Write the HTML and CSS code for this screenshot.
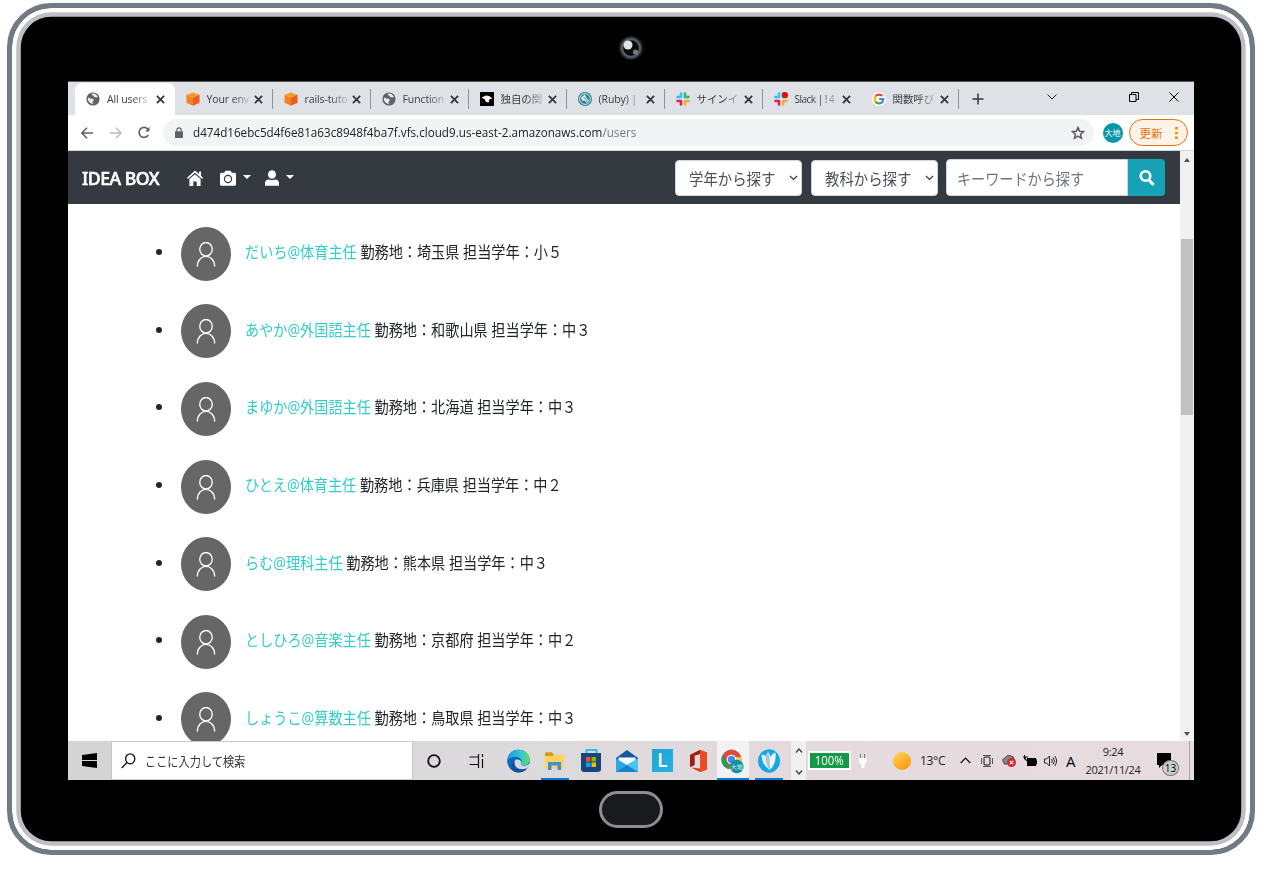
FILE: index.html
```
<!DOCTYPE html>
<html lang="ja">
<head>
<meta charset="utf-8">
<title>All users</title>
<link rel="stylesheet" href="styles.css">
</head>
<body>
<svg class="defs" aria-hidden="true">
  <defs>
    <symbol id="globe" viewBox="0 0 14 14"><circle cx="7" cy="7" r="6.600" fill="#5f6368"/><path d="M2.200 5.600Q4 7 6.500 6.600L8 8.200 6.600 9.200 7 12Q3 11.600 1.800 7.500ZM6.300 1.500 9 1.700 12 4.500 10.500 5.500 8.200 5 7.500 3.700 5.700 3Z" fill="#e8eaed"/></symbol>
    <symbol id="cube" viewBox="0 0 15 15"><path d="M7.500 .5 14.500 3 7.500 6 .5 3Z" fill="#fa9a28"/><path d="M.5 3 7.500 6V14.700L.5 11.500Z" fill="#f58220"/><path d="M14.500 3 7.500 6V14.700L14.500 11.500Z" fill="#e8601c"/></symbol>
    <symbol id="slack" viewBox="0 0 14 14"><g stroke-width="2.600" stroke-linecap="round"><path d="M5 1.500V5M1.500 5H5" stroke="#36c5f0"/><path d="M9 1.500V5M9 5h3.500" stroke="#2eb67d"/><path d="M1.500 9H5M5 9v3.500" stroke="#e01e5a"/><path d="M9 9v3.500M9 9h3.500" stroke="#ecb22e"/></g></symbol>
    <symbol id="close" viewBox="0 0 8 8"><path d="M.8.8l6.400 6.400M7.200.8.8 7.200" stroke="#33373b" stroke-width="1.600"/></symbol>
    <symbol id="person" viewBox="0 0 20 26"><ellipse cx="10" cy="7.500" rx="6.500" ry="7" fill="none" stroke="#fff" stroke-width="1.400"/><path d="M1 25.500C1 11.500 19 11.500 19 25.500" fill="none" stroke="#fff" stroke-width="1.400"/></symbol>
  </defs>
</svg>
<div class="device">
  <div class="camera"><svg width="26" height="26" viewBox="0 0 26 26"><circle cx="13" cy="13" r="12" fill="#20242b"/><circle cx="13" cy="13" r="9" fill="#08090c" stroke="#555b64" stroke-width="2.500"/><circle cx="10" cy="10" r="4.500" fill="#e2e4e8"/><circle cx="17.500" cy="17" r="2.600" fill="#737a84"/></svg></div>
  <div class="screen">
    <div class="tabs">
      <div class="tab active"><svg class="fav"><use href="#globe"/></svg><span class="title">All users</span><svg class="close"><use href="#close"/></svg></div>
      <div class="tab"><svg class="fav"><use href="#cube"/></svg><span class="title">Your env</span><svg class="close"><use href="#close"/></svg></div>
      <div class="tab"><svg class="fav"><use href="#cube"/></svg><span class="title">rails-tuto</span><svg class="close"><use href="#close"/></svg></div>
      <div class="tab"><svg class="fav"><use href="#globe"/></svg><span class="title">Function</span><svg class="close"><use href="#close"/></svg></div>
      <div class="tab"><svg class="fav" viewBox="0 0 14 14"><path d="M0 0h14v14H0Z"/><path d="M1.500 5.500 6 3.500 9 4l3.500 2.500-3 .8-1 3.200-2.800-.8L5 7.500Z" fill="#fff"/></svg><span class="title">独自の関</span><svg class="close"><use href="#close"/></svg></div>
      <div class="tab"><svg class="fav" viewBox="0 0 14 14"><circle cx="7" cy="7" r="7" fill="#2a8495"/><circle cx="7" cy="7" r="5.400" fill="none" stroke="#fff" stroke-width=".8"/><path d="M3 5.500 7 2.500l1 3 3 3-2.500 2.200L7 8.500 4.500 9Z" fill="#e6f3f5"/><path d="m5.500 5 4 4" stroke="#2a8495"/></svg><span class="title">(Ruby) |</span><svg class="close"><use href="#close"/></svg></div>
      <div class="tab"><svg class="fav"><use href="#slack"/></svg><span class="title">サインイ</span><svg class="close"><use href="#close"/></svg></div>
      <div class="tab plain"><svg class="fav" viewBox="0 0 14 14"><use href="#slack"/><circle cx="11" cy="3" r="3" fill="#f20505"/></svg><span class="title tight">Slack | ! 4</span><svg class="close"><use href="#close"/></svg></div>
      <div class="tab"><svg class="fav" viewBox="0 0 14 14"><circle cx="7" cy="7" r="7" fill="#fff"/><g fill="none" stroke-width="2.200"><path d="M3.600 4.300A4.400 4.400 0 0 1 10.400 4" stroke="#ea4335"/><path d="M3.600 4.300A4.400 4.400 0 0 0 3.500 9.600" stroke="#fbbc05"/><path d="M3.500 9.600A4.400 4.400 0 0 0 9.700 10.500" stroke="#34a853"/><path d="M9.700 10.500Q11.300 9.300 11.300 7H7.200" stroke="#4285f4"/></g></svg><span class="title">関数呼び</span><svg class="close"><use href="#close"/></svg></div>
      <svg class="plus" width="12" height="12"><path d="M6 .5v11M.5 6h11" stroke="#33373b" stroke-width="1.500"/></svg>
      <div class="window-buttons">
        <svg width="10" height="6"><path d="m.5.500 4.500 4.500L9.500.5" fill="none" stroke="#222"/></svg>
        <svg width="10" height="10"><path d="M.5 2.500h6.500v7H.5ZM2.500 2.500V.5h7v7H7" fill="none" stroke="#000"/></svg>
        <svg width="10" height="10"><path d="m.5.500 9 9M9.500.5l-9 9" stroke="#000"/></svg>
      </div>
    </div>
    <div class="toolbar">
      <svg width="12" height="12"><path d="M12 6H1M6 .8.900 6 6 11.200" fill="none" stroke="#5f6368" stroke-width="1.500"/></svg>
      <svg width="12" height="12"><path d="M0 6h11M6 .8 11.100 6 6 11.200" fill="none" stroke="#b7babd" stroke-width="1.300"/></svg>
      <svg width="12" height="13"><path d="M10.300 9A5 5 0 1 1 10 3.300" fill="none" stroke="#5f6368" stroke-width="1.600"/><path d="M11.500.800V5.600H7Z" fill="#5f6368"/></svg>
      <div class="address">
        <svg class="lock" width="8" height="11"><path d="M0 4.300h8V11H0Z" fill="#5f6368"/><path d="M1.900 5V3a2.100 2.100 0 0 1 4.200 0v2" fill="none" stroke="#5f6368" stroke-width="1.200"/></svg>
        <span class="url">d474d16ebc5d4f6e81a63c8948f4ba7f.vfs.cloud9.us-east-2.amazonaws.com<i>/users</i></span>
        <svg class="star" width="14" height="14" viewBox="0 0 14 14"><path d="m7 1.500 1.600 3.700 4 .4-3 2.700.9 4L7 10.200l-3.500 2.100.9-4-3-2.700 4-.4Z" fill="none" stroke="#55595e" stroke-width="1.500"/></svg>
      </div>
      <div class="profile">大地</div>
      <div class="update"><span>更新</span><svg width="3" height="14"><path d="M0 1h3v2.500H0ZM0 5.700h3v2.500H0ZM0 10.500h3V13H0Z" fill="#f29900"/></svg></div>
    </div>
    <div class="viewport">
      <div class="page">
        <nav class="navbar">
          <span class="brand">IDEA BOX</span>
          <svg class="home" width="16" height="16" viewBox="0 0 16 16"><path d="M8 .5 12 4V1.500h2v4.300L16 7.800l-.9 1.200L8 2.700.9 9 0 7.800Z" fill="#fff"/><path d="M8 4.200 13.600 9v7H9.700v-4.500H6.300V16H2.400V9Z" fill="#fff"/></svg>
          <svg class="cam" width="16" height="16" viewBox="0 0 16 16"><path d="M1.500 2.800H4.300L5.300 .8h5.400l1 2h2.800a1.500 1.500 0 0 1 1.500 1.500v9.900a1.500 1.500 0 0 1-1.500 1.500h-13A1.500 1.500 0 0 1 0 14.200V4.300a1.500 1.500 0 0 1 1.500-1.500Z" fill="#fff"/><circle cx="8" cy="9" r="3.600" fill="none" stroke="#343a40" stroke-width="1.200"/></svg>
          <i class="caret"></i>
          <svg class="user" width="14" height="16" viewBox="0 0 14 16"><ellipse cx="7" cy="4.500" rx="4" ry="4.300" fill="#fff"/><path d="M0 15.800v-2.500C0 10.500 2 9.500 4 9.500q3 1.300 6 0c2 0 4 1 4 3.800v2.500Z" fill="#fff"/></svg>
          <i class="caret"></i>
          <div class="select first"><span>学年から探す</span><svg width="9" height="6"><path d="m1 1 3.500 3.500L8 1" fill="none" stroke="#343a40" stroke-width="1.200"/></svg></div>
          <div class="select"><span>教科から探す</span><svg width="9" height="6"><path d="m1 1 3.500 3.500L8 1" fill="none" stroke="#343a40" stroke-width="1.200"/></svg></div>
          <div class="keyword"><span>キーワードから探す</span></div>
          <div class="search"><svg width="16" height="18" viewBox="0 0 16 18"><circle cx="6.500" cy="7" r="4.800" fill="none" stroke="#fff" stroke-width="2.600"/><path d="m10 11 4.500 5" stroke="#fff" stroke-width="3"/></svg></div>
        </nav>
        <ul class="users">
          <li><div class="avatar"><svg><use href="#person"/></svg></div><p><a>だいち@体育主任</a> 勤務地：埼玉県 担当学年：小５</p></li>
          <li><div class="avatar"><svg><use href="#person"/></svg></div><p><a>あやか@外国語主任</a> 勤務地：和歌山県 担当学年：中３</p></li>
          <li><div class="avatar"><svg><use href="#person"/></svg></div><p><a>まゆか@外国語主任</a> 勤務地：北海道 担当学年：中３</p></li>
          <li><div class="avatar"><svg><use href="#person"/></svg></div><p><a>ひとえ@体育主任</a> 勤務地：兵庫県 担当学年：中２</p></li>
          <li><div class="avatar"><svg><use href="#person"/></svg></div><p><a>らむ@理科主任</a> 勤務地：熊本県 担当学年：中３</p></li>
          <li><div class="avatar"><svg><use href="#person"/></svg></div><p><a>としひろ@音楽主任</a> 勤務地：京都府 担当学年：中２</p></li>
          <li><div class="avatar"><svg><use href="#person"/></svg></div><p><a>しょうこ@算数主任</a> 勤務地：鳥取県 担当学年：中３</p></li>
        </ul>
      </div>
      <div class="scrollbar"><i class="up"></i><b></b><i class="down"></i></div>
    </div>
    <div class="taskbar">
      <div class="start"><svg width="15" height="15" viewBox="0 0 15 15"><path d="M0 2 15 0v7H0ZM0 8h15v7L0 13Z"/></svg></div>
      <div class="finder"><svg width="15" height="16" viewBox="0 0 15 16"><ellipse cx="9.200" cy="5.800" rx="4.600" ry="5" fill="none" stroke="#111" stroke-width="1.300"/><path d="M6 9.500.6 15" stroke="#111" stroke-width="1.300"/></svg><span>ここに入力して検索</span></div>
      <div class="apps">
        <div class="app wide"><svg width="14" height="14"><circle cx="7" cy="7" r="5.800" fill="none" stroke="#111" stroke-width="1.800"/></svg></div>
        <div class="app wide"><svg width="15" height="14"><path d="M.5 3h9V0M.5 10.500h9V14M9.500 3v7.500M13.500 0v3M13.500 5v9" fill="none" stroke="#111" stroke-width="1.200"/></svg></div>
        <div class="app"><svg width="23" height="24" viewBox="0 0 23 24"><defs><linearGradient id="eg" x2="1"><stop stop-color="#169be0"/><stop offset=".6" stop-color="#31c6d2"/><stop offset="1" stop-color="#65df60"/></linearGradient></defs><circle cx="11.500" cy="12" r="11.300" fill="#0c66b8"/><path d="M.3 11C1 4 6 .7 11.500.7 18 .7 22.800 5 22.800 10.500c0 4-3 6-6.300 6-2.500 0-3.200-1.200-2.500-2.300C16 10.500 12 7.500 8 8 4 8.300 1 10 .3 11Z" fill="url(#eg)"/><path d="M8.500 10.500Q6 14 9 18q4 4 11 1.200l1.500-1.700 1.500 2-3 4.500H24V14l-5 2.500c-4 .7-6-.5-4.800-2.700Q14 10 8.500 10.500Z" fill="#dad8da"/><path d="M7.500 11c-1.500 7 4 12 12.500 8.500-3 4-9 5.500-13.500 2.500Q2 18 7.500 11Z" fill="#154d9c"/></svg></div>
        <div class="app running"><svg width="19" height="18" viewBox="0 0 19 18"><path d="M0 1.500Q0 .3 1.200.3H7l1.800 3H19V16H0Z" fill="#d99a17"/><path d="M0 4h8l1.300-1.500H19V16.500H0Z" fill="#ffd35d"/><path d="M3 18V10h13v8h-3.500v-4.500h-6V18Z" fill="#3b91d9"/></svg></div>
        <div class="app"><svg width="20" height="23" viewBox="0 0 20 23"><path d="M5.500 6V1h10v5" fill="none" stroke="#35b8ea" stroke-width="1.800"/><path d="M0 4h20v16q0 3-3 3H3q-3 0-3-3Z" fill="#17467c"/><path d="M5 8h4.500v4.500H5Z" fill="#f25022"/><path d="M10.500 8H15v4.500h-4.500Z" fill="#7fba00"/><path d="M5 13.500h4.500V18H5Z" fill="#00a4ef"/><path d="M10.500 13.500H15V18h-4.500Z" fill="#ffb900"/></svg></div>
        <div class="app"><svg width="22" height="22" viewBox="0 0 22 22"><path d="M0 8 11 0l11 8v14H0Z" fill="#1657a0"/><path d="M2.500 7.500h17V12L11 16 2.500 12Z" fill="#fff"/><path d="M0 8.500 11 15 22 8.500V22H0Z" fill="#2aa8e8"/><path d="M0 22 11 15l11 7Z" fill="#1683d0"/><path d="M11 15 22 8.500V22Z" fill="#48c3f4"/></svg></div>
        <div class="app"><div class="letter"><span>L</span></div></div>
        <div class="app"><svg width="17" height="22" viewBox="0 0 17 22"><path d="M0 5 10 0l7 2.500v17L10 22 1 17.500l9 1V4L4.500 5.500V15L0 17Z" fill="#d83b1d"/><path d="M0 5 10 0v4L4.500 5.500V15L0 17Z" fill="#a31818"/><path d="M10 0l7 2.500v17L10 22Z" fill="#eb4b20"/></svg></div>
        <div class="app current"><svg width="23" height="25" viewBox="0 0 23 25"><circle cx="10.500" cy="10.500" r="10" fill="#dd4b3e"/><path d="M1.500 6 8 17l-.5 3.200A10 10 0 0 1 1.500 6Z" fill="#249b57"/><path d="M8 20.200 15 8h5a10 10 0 0 1-12 12.200Z" fill="#f6cb3b"/><circle cx="10.500" cy="10.500" r="4.800" fill="#fff"/><circle cx="10.500" cy="10.500" r="3.700" fill="#4688ee"/><circle cx="15.800" cy="17.500" r="6.800" fill="#13919b"/><text x="15.800" y="20" class="badge-text">大地</text></svg></div>
        <div class="app bird"><svg width="22" height="24" viewBox="0 0 22 24"><ellipse cx="11" cy="12" rx="11" ry="11.800" fill="#12a9e3"/><path d="M3.500 6q2-1 4 1 1-2 2.500-4 2 2 2.500 5 2-4 5-4.500.5 4.500-.5 9-1.500 5.500-5.500 8.500Q4 16 3.500 6Z" fill="#e9f5f9"/><path d="M10 3q3 8 1.500 18Q7 14 7.500 7Z" fill="#a8c7d3"/></svg></div>
      </div>
      <div class="spinner"><svg width="8" height="5"><path d="M1 4.500 4 1l3 3.500" fill="none" stroke="#444" stroke-width="1.400"/></svg><svg width="8" height="5"><path d="M1 .5 4 4 7 .5" fill="none" stroke="#444" stroke-width="1.400"/></svg></div>
      <div class="tray">
        <div class="battery"><span>100%</span></div>
        <svg class="plug" width="9" height="14"><path d="M1 4h7.500v4L6.500 10.500V14h-3v-3.500L1 8Z" fill="#fff"/><path d="M2.500 4V0M6.500 4V0" stroke="#777"/></svg>
        <div class="sun"></div>
        <span class="temp">13°C</span>
        <svg class="t1" width="11" height="7"><path d="M.7 6 5.500 1l4.800 5" fill="none" stroke="#111" stroke-width="1.200"/></svg>
        <svg class="t2" width="12" height="12"><rect x="3" y="2" width="6" height="8" rx="1" fill="none" stroke="#111"/><path d="M2 .5h8M2 11.500h8M.5 3v6M11.500 3v6" stroke="#333" stroke-width=".8"/></svg>
        <svg class="t3" width="14" height="13"><path d="M2 9Q-1 5 3 4q2-4 6-2 3 0 3 4v4H2Z" fill="#888" stroke="#444"/><circle cx="9.500" cy="8.500" r="4.500" fill="#d92231"/><path d="m7.800 6.800 3.400 3.400m0-3.400-3.400 3.400" stroke="#fff" stroke-width="1.200"/></svg>
        <svg class="t4" width="14" height="12"><path d="M4 3h9v8H4Z"/><path d="M13 5h1v4h-1ZM0 2h5M1.500 0v4L4 6" stroke="#111" stroke-width="1"/></svg>
        <svg class="t5" width="13" height="12"><path d="M.5 4h2L5.500 1v10l-3-3h-2ZM7.500 4q1.500 2 0 4M9 2.500q3 3.500 0 7M10.800 1q3.500 5 0 10" fill="none" stroke="#111" stroke-width=".9"/></svg>
        <span class="ime">A</span>
        <div class="clock"><span>9:24</span><span>2021/11/24</span></div>
        <div class="notice"><svg width="14" height="15"><path d="M0 0h14v12H5l-3 3v-3H0Z"/></svg><b>13</b></div>
        <i class="desktop"></i>
      </div>
    </div>
  </div>
  <div class="home-button"></div>
</div>
</body>
</html>
```
FILE: styles.css
```
* { box-sizing: border-box; }
body { margin: 0; width: 1273px; height: 877px; overflow: hidden; background: #fff; padding: 3px 0 0 7px; font-family: "Open Sans", "Noto Sans CJK JP", sans-serif; }
svg { display: block; flex: none; }
i { font-style: normal; }
.defs { position: absolute; width: 0; height: 0; }
.device { width: 1248px; height: 852px; border-radius: 44px; border: 5px solid #717b85; background: #000; box-shadow: inset 0 0 0 4.300px #fff, inset 0 0 0 8.800px #bebec6; display: flex; flex-direction: column; align-items: center; }
.camera { height: 73px; padding-top: 27px; flex: none; }
.screen { width: 1126px; height: 699px; align-self: flex-start; margin-left: 56px; display: flex; flex-direction: column; border-top: 1px solid #64585f; background: #fff; overflow: hidden; flex: none; }
.home-button { width: 64px; height: 37px; margin-top: 11px; border: 3px solid #8c8e93; border-radius: 19px; background: #191a1e; flex: none; }

.tabs { height: 33px; background: #dee1e6; display: flex; align-items: center; padding: 1px 0 0 7px; flex: none; }
.tab { width: 98px; height: 20px; display: flex; align-items: center; padding: 0 9px 0 11px; border-right: 1px solid #8e9196; flex: none; }
.tab.active { width: 99.500px; height: 32px; align-self: flex-end; background: #fff; border-radius: 7px 7px 0 0; border: 0; padding-right: 9.500px; }
.tab.plain { border-color: transparent; }
.fav { width: 14px; height: 14px; margin-right: 7px; }
.title { width: 43px; overflow: hidden; white-space: nowrap; font-size: 10.500px; line-height: 16px; letter-spacing: -.1px; color: #3c4043; -webkit-mask-image: linear-gradient(90deg, #000 60%, rgba(0,0,0,.15)); mask-image: linear-gradient(90deg, #000 60%, rgba(0,0,0,.15)); }
.title.tight { font-size: 10px; letter-spacing: -.5px; }
.close { width: 9px; height: 9px; margin-left: auto; }
.plus { margin-left: 13px; }
.window-buttons { margin-left: auto; width: 132px; margin-right: 15px; display: flex; justify-content: space-between; align-items: center; padding-bottom: 4px; }
.window-buttons svg:first-child { margin-right: 41px; }

.toolbar { height: 36px; display: flex; align-items: center; padding: 0 7px 0 13px; border-bottom: 1px solid #d2d6d6; flex: none; }
.toolbar > svg { margin-right: 16.500px; }
.address { width: 931px; height: 27px; border-radius: 14px; background: #f1f3f4; display: flex; align-items: center; padding: 0 9px 0 12px; margin-left: -4px; flex: none; }
.url { font-size: 12px; margin-left: 10px; white-space: nowrap; color: #202124; transform: scaleX(.972); transform-origin: left; }
.url i { color: #74787c; }
.star { margin-left: auto; }
.profile { width: 20px; height: 20px; border-radius: 50%; background: #0797a7; color: #fff; font-size: 8px; line-height: 20px; text-align: center; margin-left: 9px; flex: none; }
.update { width: 59px; height: 27px; margin-left: 6px; border: 1.500px solid #e8710a; border-radius: 14px; background: #fef3e8; color: #e8710a; font-size: 11.500px; display: flex; align-items: center; justify-content: space-between; padding: 0 9px 0 10px; flex: none; }

.viewport { height: 590px; display: flex; flex: none; }
.page { width: 1112px; overflow: hidden; }
.navbar { height: 53px; background: #343a40; display: flex; align-items: center; padding: 0 15px 0 14px; }
.brand { color: #fff; font-family: "Noto Sans", sans-serif; font-weight: 500; -webkit-text-stroke: .6px #fff; font-size: 18px; width: 78px; letter-spacing: -.5px; white-space: nowrap; transform: scaleX(.98); transform-origin: left; }
.home { margin-left: 27px; }
.cam { margin-left: 17px; }
.user { margin-left: 14px; }
.caret { border: 4px solid transparent; border-top-color: #fff; border-bottom: 0; margin-left: 7px; margin-top: -2px; }
.select { width: 127px; height: 36px; background: #fff; border: 1px solid #ced4da; border-radius: 4px; display: flex; align-items: center; justify-content: space-between; padding: 0 3px 0 13px; margin-right: 8.500px; color: #495057; font-size: 16px; white-space: nowrap; }
.select.first { margin-left: auto; }
.select span { width: 88px; transform: scaleX(.9); transform-origin: left; }
.keyword { width: 182px; height: 37px; background: #fff; border: 1px solid #ced4da; border-radius: 4px 0 0 4px; color: #6c757d; font-size: 16px; padding: 0 10px; display: flex; align-items: center; white-space: nowrap; }
.keyword span { transform: scaleX(.882); transform-origin: left; }
.search { width: 37px; height: 37px; border-radius: 0 4px 4px 0; background: #17a2b8; display: flex; align-items: center; justify-content: center; }
.users { list-style: none; margin: 0; padding: 11px 0 0 88px; }
.users li { height: 77.600px; display: flex; align-items: center; white-space: nowrap; color: #212529; }
.users li::before { content: ""; width: 6px; height: 6px; border-radius: 50%; background: #212529; margin: -3px 19px 0 0; }
.avatar { width: 50px; height: 54px; border-radius: 50%; background: #666; display: flex; justify-content: center; padding-top: 15px; }
.avatar svg { width: 20px; height: 25px; }
.users p { margin: 0 0 5px 14px; font-size: 16px; transform: scaleX(.884); transform-origin: left; }
.users a { color: #33cccc; }
.scrollbar { width: 14px; background: #f1f1f1; display: flex; flex-direction: column; align-items: center; padding: 7px 0 5px; }
.scrollbar i { border: 3px solid transparent; }
.scrollbar .up { border-bottom: 4px solid #505050; border-top: 0; }
.scrollbar b { width: 12px; height: 176px; background: #c1c1c1; margin-top: 77px; }
.scrollbar .down { border-top: 4px solid #505050; border-bottom: 0; margin-top: auto; }

.taskbar { height: 39px; background: linear-gradient(90deg, #d4d4d5 10%, #dbd9db 32%, #dedadc 50%, #e5dade 72%, #e6dce0); display: flex; flex: none; }
.start { width: 43px; display: flex; align-items: center; justify-content: center; }
.finder { width: 302px; background: #fff; border: 1px solid #c9c9c9; display: flex; align-items: center; padding-left: 9px; white-space: nowrap; font-size: 13px; color: #333; flex: none; }
.finder span { margin-left: 9px; transform: scaleX(.86); transform-origin: left; }
.apps { display: flex; width: 378px; flex: none; }
.app { width: 36px; display: flex; align-items: center; justify-content: center; flex: none; }
.app.wide { width: 42px; }
.wide + .app:not(.wide) { margin-left: 3.500px; }
.app.running { width: 28px; margin: 0 4px; border-bottom: 2px solid #0a78d4; padding-top: 2px; }
.app.current { width: 32px; margin-left: 0; background: #f3f2f2; border-bottom: 2px solid #0a78d4; padding-top: 4px; }
.app.bird { width: 28px; margin-left: 6px; border-bottom: 2px solid #0a78d4; padding-top: 2px; }
.letter { width: 21px; height: 23px; background: linear-gradient(135deg, #1ba8d8, #26b1de); color: #fff; font-size: 19px; line-height: 23px; text-align: center; font-weight: 600; }
.badge-text { font-size: 6px; fill: #d7f5f6; text-anchor: middle; }
.spinner { width: 15px; background: #f0f0f0; display: flex; flex-direction: column; align-items: center; justify-content: space-between; padding: 7px 0 5px; flex: none; }
.tray { flex: 1; display: flex; align-items: center; min-width: 0; }
.battery { width: 43px; height: 19px; border: 2px solid #fff; background: #159947; color: #fff; font-size: 12px; display: flex; align-items: center; justify-content: center; margin-left: 2px; flex: none; }
.battery span { transform: scaleX(.95); }
.plug { margin-left: 7px; }
.sun { width: 18px; height: 18px; border-radius: 50%; background: linear-gradient(145deg, #ffd75c, #fb9200); margin-left: 26px; flex: none; }
.temp { font-size: 12px; width: 26px; margin-left: 9px; white-space: nowrap; letter-spacing: -.3px; color: #222; }
.t1 { margin-left: 14px; }
.t2 { margin-left: 10px; }
.t3 { margin-left: 9px; }
.t4 { margin-left: 7px; }
.t5 { margin-left: 7px; }
.ime { width: 12px; font-size: 15px; margin-left: 9px; }
.clock { width: 58px; margin-left: 6px; display: flex; flex-direction: column; align-items: center; font-size: 11px; line-height: 17.500px; letter-spacing: -.35px; color: #222; white-space: nowrap; flex: none; }
.notice { position: relative; margin-left: 15px; }
.notice b { position: absolute; left: 5px; top: 7px; width: 17px; height: 16px; border: 1px solid #777; border-radius: 50%; background: #ccc; font-weight: 400; font-size: 10px; line-height: 14px; text-align: center; }
.desktop { align-self: stretch; width: 1px; background: #aaa3a7; margin-left: auto; margin-right: 4px; }
```
